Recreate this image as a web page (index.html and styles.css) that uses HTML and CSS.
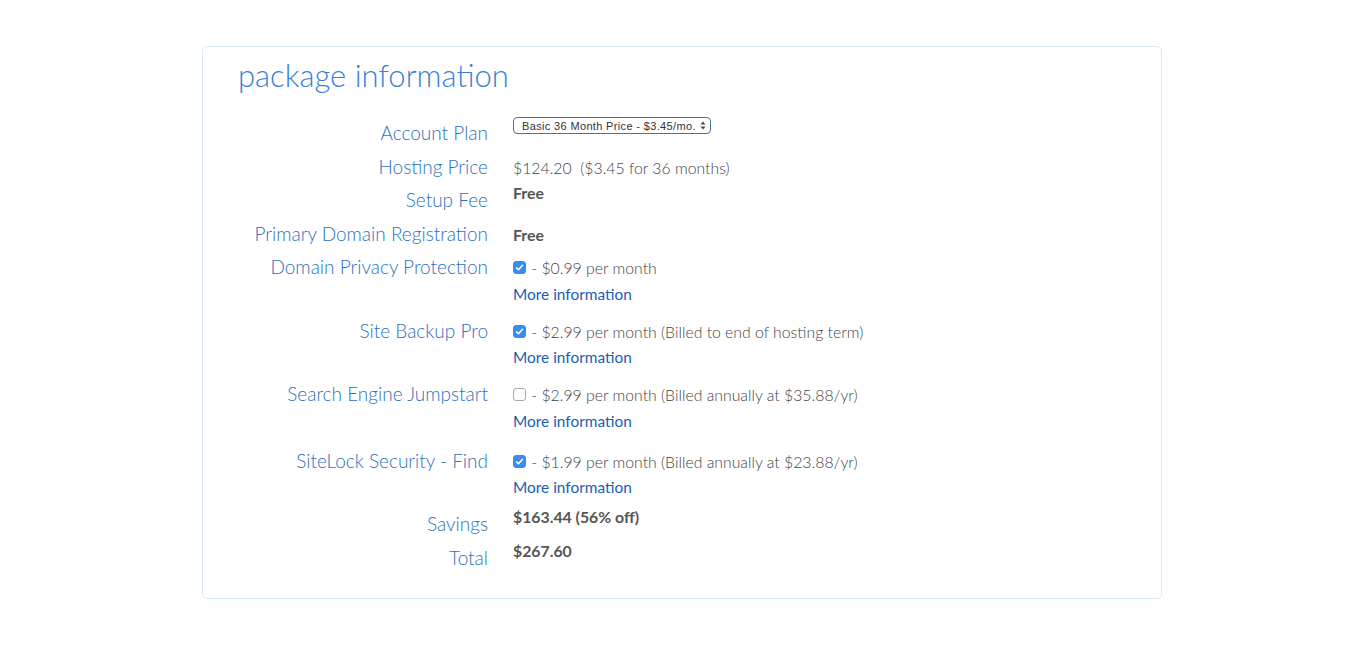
FILE: index.html
```html
<!DOCTYPE html>
<html>
<head>
<meta charset="utf-8">
<link rel="stylesheet" href="styles.css">
</head>
<body>
<div class="page">
  <section class="box">
    <h2 class="title">package information</h2>
    <div class="rows">
      <div class="row">
        <div class="label">Account Plan</div>
        <div class="value">
          <div class="select"><span>Basic 36 Month Price - $3.45/mo.</span>
            <svg class="arrows" width="6" height="9" viewBox="0 0 6 9"><path d="M3 0.5L5.5 3.5H0.5Z M3 8.5L5.5 5.5H0.5Z" fill="#444"/></svg>
          </div>
        </div>
      </div>
      <div class="row">
        <div class="label">Hosting Price</div>
        <div class="value"><div class="line">$124.20&nbsp; ($3.45 for 36 months)</div></div>
      </div>
      <div class="row">
        <div class="label">Setup Fee</div>
        <div class="value"><div class="line strong up">Free</div></div>
      </div>
      <div class="row">
        <div class="label">Primary Domain Registration</div>
        <div class="value"><div class="line strong">Free</div></div>
      </div>
      <div class="row addon">
        <div class="label">Domain Privacy Protection</div>
        <div class="value">
          <div class="line"><span class="check on"><svg width="13" height="13" viewBox="0 0 13 13"><path d="M3.6 6.9L5.5 8.8L9.5 4.3" stroke="#fff" stroke-width="1.5" fill="none" stroke-linecap="round" stroke-linejoin="round"/></svg></span> - $0.99 per month</div>
          <a class="more" href="#">More information</a>
        </div>
      </div>
      <div class="row addon">
        <div class="label">Site Backup Pro</div>
        <div class="value">
          <div class="line"><span class="check on"><svg width="13" height="13" viewBox="0 0 13 13"><path d="M3.6 6.9L5.5 8.8L9.5 4.3" stroke="#fff" stroke-width="1.5" fill="none" stroke-linecap="round" stroke-linejoin="round"/></svg></span> - $2.99 per month (Billed to end of hosting term)</div>
          <a class="more" href="#">More information</a>
        </div>
      </div>
      <div class="row addon extra">
        <div class="label">Search Engine Jumpstart</div>
        <div class="value">
          <div class="line"><span class="check"></span> - $2.99 per month (Billed annually at $35.88/yr)</div>
          <a class="more" href="#">More information</a>
        </div>
      </div>
      <div class="row addon">
        <div class="label">SiteLock Security - Find</div>
        <div class="value">
          <div class="line"><span class="check on"><svg width="13" height="13" viewBox="0 0 13 13"><path d="M3.6 6.9L5.5 8.8L9.5 4.3" stroke="#fff" stroke-width="1.5" fill="none" stroke-linecap="round" stroke-linejoin="round"/></svg></span> - $1.99 per month (Billed annually at $23.88/yr)</div>
          <a class="more" href="#">More information</a>
        </div>
      </div>
      <div class="row">
        <div class="label">Savings</div>
        <div class="value"><div class="line strong up">$163.44 (56% off)</div></div>
      </div>
      <div class="row">
        <div class="label">Total</div>
        <div class="value"><div class="line strong up">$267.60</div></div>
      </div>
    </div>
  </section>
</div>
</body>
</html>
```

FILE: styles.css
```css
html, body {
  margin: 0;
  padding: 0;
  background: #fff;
}
body {
  font-family: Lato, "Open Sans", sans-serif;
  color: #555;
}
.page {
  padding: 46px 0 0 202px;
}
.box {
  width: 960px;
  height: 553px;
  box-sizing: border-box;
  border: 1px solid #d8e8f6;
  border-radius: 5px;
  padding: 8px 0 0 35px;
}
.title {
  margin: 0;
  font-size: 31px;
  font-weight: 300;
  color: #3a7fd6;
  line-height: 40px;
}
.rows {
  margin-top: 21px;
}
.row {
  display: flex;
  align-items: flex-start;
}
.label {
  width: 250px;
  text-align: right;
  font-size: 19px;
  font-weight: 300;
  color: #2c70c0;
  line-height: 33.5px;
  flex: none;
}
.value {
  margin-left: 25px;
  padding-top: 1px;
  margin-bottom: -1px;
  font-size: 15.8px;
  font-weight: 300;
  color: #444;
}
.line {
  line-height: 33.5px;
  display: flex;
  align-items: center;
  white-space: pre;
}
.strong {
  font-weight: 700;
  color: #555;
}
.up {
  margin-top: -8px;
}
.addon {
  margin-bottom: 8px;
}
.addon.extra {
  margin-bottom: 11px;
}
.more {
  display: block;
  line-height: 26px;
  margin-top: -4px;
  color: #1d5cb3;
  text-decoration: none;
  font-weight: 400;
  font-size: 15.4px;
}
.check {
  width: 13px;
  height: 13px;
  box-sizing: border-box;
  border-radius: 3px;
  border: 1px solid #a8a8a8;
  background: #fff;
  display: inline-block;
  margin-right: 1px;
  position: relative;
}
.check.on {
  background: #3a8df0;
  border-color: #3a8df0;
}
.check svg {
  position: absolute;
  left: -1px;
  top: -1px;
}
.select {
  margin-top: 0;
  width: 198px;
  height: 17px;
  box-sizing: border-box;
  border: 1px solid #4a72a0;
  border-radius: 4px;
  font-family: "Liberation Sans", Arial, sans-serif;
  font-size: 11px;
  letter-spacing: 0.35px;
  color: #333;
  display: flex;
  align-items: center;
  justify-content: space-between;
  padding: 0 4px 0 8px;
}
.arrows {
  flex: none;
}
```
